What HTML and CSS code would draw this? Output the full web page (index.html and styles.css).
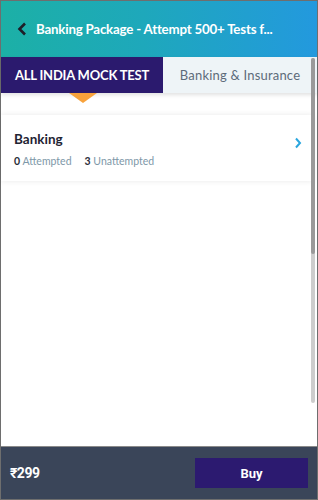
FILE: index.html
```html
<!DOCTYPE html>
<html lang="en">
<head>
    <meta charset="UTF-8">
    <meta name="viewport" content="width=device-width, initial-scale=1.0">
    <title>Banking Package</title>
    <link rel="stylesheet" href="styles.css">
</head>
<body>
    <div class="app">
        <!-- header with back arrow and package title -->
        <div class="header">
            <svg class="back" width="10" height="14" viewBox="0 0 10 14">
                <path d="M8 1.5 L2.5 7 L8 12.5" fill="none" stroke="#1e1e28" stroke-width="2.6"/>
            </svg>
            <span class="title">Banking Package - Attempt 500+ Tests f...</span>
        </div>

        <div class="tabs">
            <div class="tab active">ALL INDIA MOCK TEST</div>
            <div class="tab">Banking &amp; Insurance</div>
        </div>

        <div class="content">
            <div class="card">
                <div class="card-info">
                    <div class="card-title">Banking</div>
                    <div class="stats">
                        <span><b>0</b> Attempted</span>
                        <span><b>3</b> Unattempted</span>
                    </div>
                </div>
                <svg class="chevron" width="8" height="12" viewBox="0 0 8 12">
                    <path d="M2 1.5 L6 6 L2 10.5" fill="none" stroke="#2aa6de" stroke-width="2"/>
                </svg>
            </div>
        </div>

        <div class="footer">
            <span class="price">₹299</span>
            <button class="buy">Buy</button>
        </div>

        <div class="scrollbar"><div class="thumb"></div></div>
    </div>
</body>
</html>
```

FILE: styles.css
```css
body {
    margin: 0;
    font-family: Lato, "Open Sans", sans-serif;
}
.app {
    width: 318px;
    height: 500px;
    box-sizing: border-box;
    border: 1px solid #6e6e6e;
    display: flex;
    flex-direction: column;
    position: relative;
    background: #fff;
}
.header {
    height: 56px;
    display: flex;
    align-items: center;
    gap: 9px;
    padding-left: 16px;
    background: linear-gradient(90deg, #1cb0a6 0%, #1ea8bb 45%, #2399de 100%);
}
.title {
    color: #fff;
    font-weight: 700;
    font-size: 13.3px;
    letter-spacing: -0.2px;
}
.tabs {
    display: flex;
    height: 36px;
    box-shadow: 0 2px 4px rgba(0, 0, 0, 0.12);
    position: relative;
    z-index: 2;
}
.tab {
    flex: 1;
    display: flex;
    align-items: center;
    justify-content: center;
    background: #eef4f7;
    color: #5d6b7a;
    font-size: 13px;
    letter-spacing: 0.2px;
}
.tab.active {
    flex: 0 0 162px;
    background: #2b1a6e;
    color: #fff;
    font-weight: 700;
    font-size: 13px;
    letter-spacing: -0.2px;
    position: relative;
}
.tab.active::after {
    content: "";
    position: absolute;
    left: 68px;
    top: 36px;
    border-left: 14px solid transparent;
    border-right: 14px solid transparent;
    border-top: 10px solid #f8a23b;
}
.content {
    flex: 1;
    padding-top: 22px;
    padding-right: 4px;
}
.card {
    height: 66px;
    display: flex;
    align-items: center;
    justify-content: space-between;
    padding: 0 11px 0 13px;
    box-shadow: 0 0 6px rgba(0, 0, 0, 0.09);
}
.chevron {
    margin-bottom: 10px;
}
.card-title {
    color: #1f2333;
    font-weight: 700;
    font-size: 13.5px;
    margin-top: 2px;
}
.stats {
    display: flex;
    gap: 13px;
    margin-top: 8px;
    font-size: 10.5px;
    color: #7e98a8;
}
.stats b {
    color: #2a2e3a;
}
.footer {
    height: 52px;
    display: flex;
    align-items: center;
    justify-content: space-between;
    padding: 0 9px 0 9px;
    background: #3a4559;
    border-top: 1px solid #8a8a8a;
}
.price {
    color: #fff;
    font-family: Roboto, sans-serif;
    font-weight: 700;
    font-size: 14px;
    letter-spacing: -0.5px;
}
.buy {
    width: 113px;
    height: 30px;
    border: none;
    background: #2c1a70;
    color: #fff;
    font-family: Roboto, sans-serif;
    font-weight: 700;
    font-size: 13px;
}
.scrollbar {
    position: absolute;
    right: 2px;
    top: 57px;
    width: 4px;
    height: 345px;
    background: #cdcdcd;
    border-radius: 2px;
    z-index: 3;
}
.thumb {
    height: 196px;
    background: #9a9a9a;
    border-radius: 2px;
}
```
